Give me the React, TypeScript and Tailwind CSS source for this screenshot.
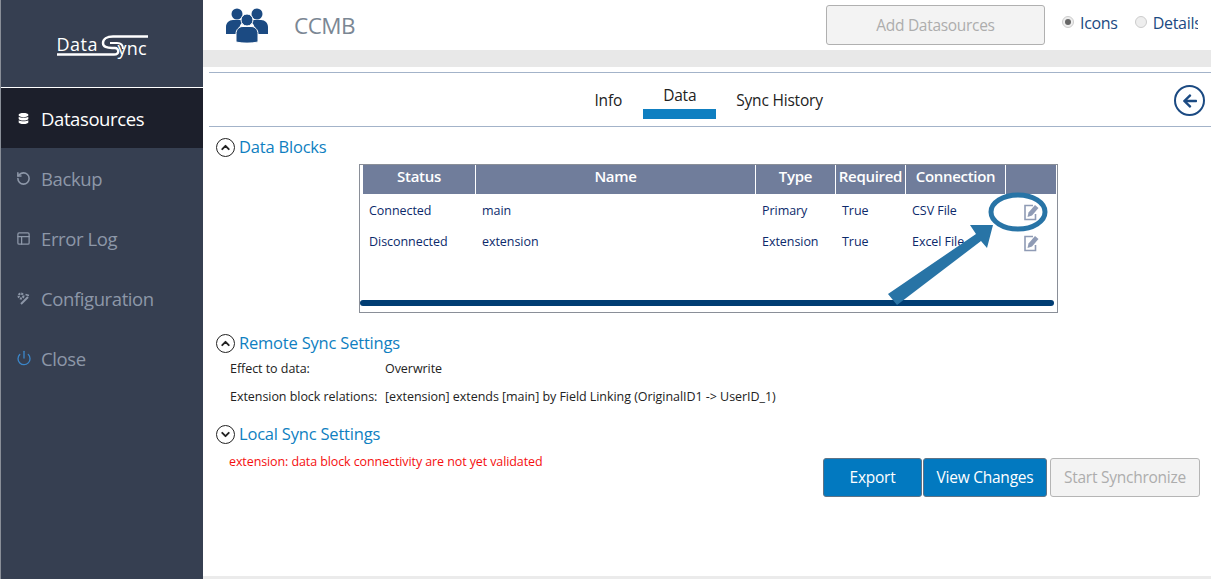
import { ChevronDown, ChevronUp, Power, RotateCcw, PanelsTopLeft } from "lucide-react";
import { FaArrowLeft, FaDatabase } from "react-icons/fa";

const font = "font-['Open_Sans','Noto_Sans',sans-serif]";

const columns = [
  { label: "Status", width: "w-[113px]" },
  { label: "Name", width: "w-[280px]" },
  { label: "Type", width: "w-[80px]" },
  { label: "Required", width: "w-[70px]" },
  { label: "Connection", width: "w-[100px]" },
  { label: "", width: "w-[50px]" },
];

const rows = [
  ["Connected", "main", "Primary", "True", "CSV File"],
  ["Disconnected", "extension", "Extension", "True", "Excel File"],
];

function UsersIcon() {
  return (
    <svg width="42" height="36" viewBox="0 0 42 36" className="text-[#1b4a82]" fill="currentColor">
      <circle cx="11" cy="7" r="5.500" />
      <circle cx="31" cy="7" r="5.500" />
      <path d="M0 27v-7c0-4 3-7 7-7h8c1 0 2 .4 3 1-3 2-5 5-5 9v4z" />
      <path d="M42 27v-7c0-4-3-7-7-7h-8c-1 0-2 .4-3 1 3 2 5 5 5 9v4z" />
      <circle cx="21" cy="13" r="6" stroke="white" strokeWidth="1" />
      <path d="M10 35v-8c0-4.500 3-7.500 7-7.500h8c4 0 7 3 7 7.500v8c-6 1.500-16 1.500-22 0z" stroke="white" strokeWidth="1" />
    </svg>
  );
}

function ConfigIcon() {
  return (
    <svg width="14" height="14" viewBox="0 0 14 14" fill="none" stroke="currentColor">
      <circle cx="5" cy="5" r="2.400" strokeWidth="2.200" strokeDasharray="1.800 .8" />
      <path d="M5 13 L12 6" strokeWidth="2" />
      <path d="M9.500 3.500 L13 4.500" strokeWidth="1.500" />
    </svg>
  );
}

function EditIcon() {
  return (
    <svg width="15" height="17" viewBox="0 0 15 17" fill="none" className="text-[#8f9bb5]">
      <path d="M9 1.500H1V15.500H11.500V10" stroke="currentColor" strokeWidth="1.600" />
      <path d="M3.500 13 L4.500 8.500 L11 1 L14.500 4 L8 11.500 Z" fill="currentColor" />
    </svg>
  );
}

function Logo() {
  return (
    <div className="relative w-[92px] h-[22px] text-white text-[18px] leading-[22px] mt-[2px] ml-[2px]">
      <span className="absolute left-0 -top-[1px] tracking-[0.5px]">Data</span>
      <span className="absolute left-[61px] top-[3px] tracking-[0.2px]">ync</span>
      <svg className="absolute inset-0" width="92" height="22" viewBox="0 0 92 22" fill="none" stroke="white" strokeWidth="2.400">
        <path d="M91 2.500H56C50 2.500 46 5 46 9S50 14 55 14H58C62 14 63 20.500 57 20.500H0" />
        <path d="M53 9H60C64 9 66 11 66 15" strokeWidth="2" />
      </svg>
    </div>
  );
}

function NavItem({ icon, label, active, iconClass }: { icon: React.ReactNode; label: string; active?: boolean; iconClass?: string }) {
  return (
    <div className={`h-[60px] flex items-center pl-[15px] ${active ? "bg-[#1c1f2b] text-white" : "text-[#8d97a8]"}`}>
      <span className={`w-[25px] flex shrink-0 ${iconClass ?? ""}`}>{icon}</span>
      <span className="text-[18.500px] tracking-[-0.4px] mt-[2px]">{label}</span>
    </div>
  );
}

function SectionTitle({ open, title }: { open: boolean; title: string }) {
  return (
    <div className="flex items-center gap-[4px] h-[24px]">
      <span className="w-[19px] h-[19px] rounded-full border border-[#222] flex items-center justify-center text-[#222] shrink-0">
        {open ? <ChevronUp size={13} strokeWidth={3.500} /> : <ChevronDown size={13} strokeWidth={3.500} />}
      </span>
      <span className="text-[16.500px] text-[#0f7fc1] tracking-[-0.2px]">{title}</span>
    </div>
  );
}

function Radio({ checked, label }: { checked?: boolean; label: string }) {
  return (
    <div className="flex items-start gap-[6px] shrink-0">
      <span className="w-[12px] h-[12px] mt-[5px] rounded-full border border-[#ccc] bg-[#eee] flex items-center justify-center">
        {checked && <span className="w-[6px] h-[6px] rounded-full bg-[#666]" />}
      </span>
      <span className="text-[16px] text-[#1b4a82] tracking-[-0.3px]">{label}</span>
    </div>
  );
}

export default function App() {
  return (
    <div className={`${font} w-[1211px] h-[579px] flex overflow-hidden bg-white`}>
      <aside className="w-[203px] shrink-0 h-full bg-[#363f51] border-l border-[#8a8f98] flex flex-col">
        <div className="h-[87px] flex items-center justify-center pr-[1px]">
          <Logo />
        </div>
        <div className="h-px bg-white" />
        <NavItem active label="Datasources" icon={<FaDatabase size={11} className="mt-px ml-[2px]" />} />
        <NavItem label="Backup" icon={<RotateCcw size={15} strokeWidth={2.500} />} />
        <NavItem label="Error Log" icon={<PanelsTopLeft size={15} strokeWidth={2} />} />
        <NavItem label="Configuration" icon={<ConfigIcon />} />
        <NavItem label="Close" iconClass="text-[#3b86c9]" icon={<Power size={16} strokeWidth={2} />} />
      </aside>

      <main className="flex-1 min-w-0 flex flex-col relative">
        <header className="h-[50px] flex items-center pl-[23px] overflow-hidden">
          <UsersIcon />
          <span className="ml-[26px] text-[22.500px] text-[#7b8794] tracking-[-0.5px] mt-[2px] w-[62px] shrink-0">CCMB</span>
          <div className="ml-[470px] w-[219px] h-[40px] pt-[2px] rounded-[3px] border border-[#b0b0b0] bg-[#f3f3f3] text-[#adadad] text-[15.500px] tracking-[-0.3px] flex items-center justify-center shrink-0">
            Add Datasources
          </div>
          <div className="ml-[17px] flex gap-[17px] self-start mt-[11px] w-[136px] overflow-hidden">
            <Radio checked label="Icons" />
            <Radio label="Details" />
          </div>
        </header>
        <div className="h-[17px] bg-[#e8e8e8] shrink-0" />

        <div className="ml-[6px] mt-[5px] flex-1 flex flex-col min-h-0">
          <div className="h-[55px] border-y border-[#a3b3c9] flex justify-center relative shrink-0">
            <div className="flex items-start text-[15.500px] text-[#222] -ml-[24px] tracking-[-0.2px]">
              <span className="w-[70px] text-center mt-[16px]">Info</span>
              <span className="w-[73px] text-center flex flex-col mt-[11px]">
                <span>Data</span>
                <span className="h-[10px] bg-[#0f7fc1] mt-[2px]" />
              </span>
              <span className="ml-[20px] mt-[16px]">Sync History</span>
            </div>
            <span className="absolute right-[6px] top-[12px] w-[31px] h-[31px] rounded-full border-[2.500px] border-[#1b4a82] text-[#1b4a82] flex items-center justify-center">
              <FaArrowLeft size={16} />
            </span>
          </div>

          <section className="pl-[7px] pt-[8px]">
            <SectionTitle open title="Data Blocks" />
            <div className="relative ml-[143px] mt-[5px] w-[699px] h-[149px] border border-[#8a8f98] pl-[3px]">
              <div className="flex h-[29px] bg-[#707d9b] text-white text-[15px] font-semibold tracking-[-0.3px] w-[693px]">
                {columns.map((c, i) => (
                  <div key={i} className={`${c.width} shrink-0 text-center border-r border-white last:border-r-0 leading-[22px]`}>
                    {c.label}
                  </div>
                ))}
              </div>
              <div className="pt-[2px]">
                {rows.map((r) => (
                  <div key={r[0]} className="flex h-[31px] items-center text-[12.500px] text-[#0c2a6b] tracking-[-0.05px]">
                    {r.map((cell, i) => (
                      <div key={i} className={`${columns[i].width} shrink-0 pl-[6px]`}>{cell}</div>
                    ))}
                    <div className="w-[50px] flex justify-center pt-[1px]"><EditIcon /></div>
                  </div>
                ))}
              </div>
              <div className="absolute left-0 right-[3px] bottom-[6px] h-[6px] rounded-full bg-[#003d73]" />
              <svg className="absolute left-[521px] top-[25px] pointer-events-none" width="180" height="120" viewBox="0 0 180 120" fill="none">
                <ellipse cx="137" cy="22" rx="27" ry="17" stroke="#2874a6" strokeWidth="5" />
                <path d="M89 35 L112 35 L106 58 L100 51 L16 115 L7 104 L95 44 Z" fill="#2874a6" />
              </svg>
            </div>
          </section>

          <section className="pl-[7px] mt-[18px]">
            <SectionTitle open title="Remote Sync Settings" />
            <div className="pl-[14px] text-[12.500px] text-[#222] tracking-[-0.05px]">
              <div className="flex h-[28px] items-center">
                <span className="w-[155px] shrink-0">Effect to data:</span>
                <span>Overwrite</span>
              </div>
              <div className="flex h-[28px] items-center">
                <span className="w-[155px] shrink-0">Extension block relations:</span>
                <span>[extension] extends [main] by Field Linking (OriginalID1 -&gt; UserID_1)</span>
              </div>
            </div>
          </section>

          <section className="pl-[7px] mt-[11px]">
            <SectionTitle open={false} title="Local Sync Settings" />
            <div className="flex justify-between items-start pr-[11px]">
              <div className="pl-[13px] pt-[7px] text-[12.500px] text-[#f50f0f] tracking-[-0.1px]">
                extension: data block connectivity are not yet validated
              </div>
              <div className="flex gap-[1px] mt-[12px] text-[15.500px] tracking-[-0.25px]">
                <div className="w-[99px] h-[39px] rounded-[3px] border border-[#5f7386] bg-[#0279c0] text-white flex items-center justify-center">Export</div>
                <div className="w-[124px] h-[39px] rounded-[3px] border border-[#5f7386] bg-[#0279c0] text-white flex items-center justify-center">View Changes</div>
                <div className="ml-[2px] w-[150px] h-[39px] rounded-[3px] border border-[#b5b5b5] bg-[#f3f3f3] text-[#adadad] flex items-center justify-center">Start Synchronize</div>
              </div>
            </div>
          </section>
          <div className="mt-auto" />
        </div>
        <div className="h-[3px] bg-[#ebebeb] shrink-0" />
      </main>
    </div>
  );
}
